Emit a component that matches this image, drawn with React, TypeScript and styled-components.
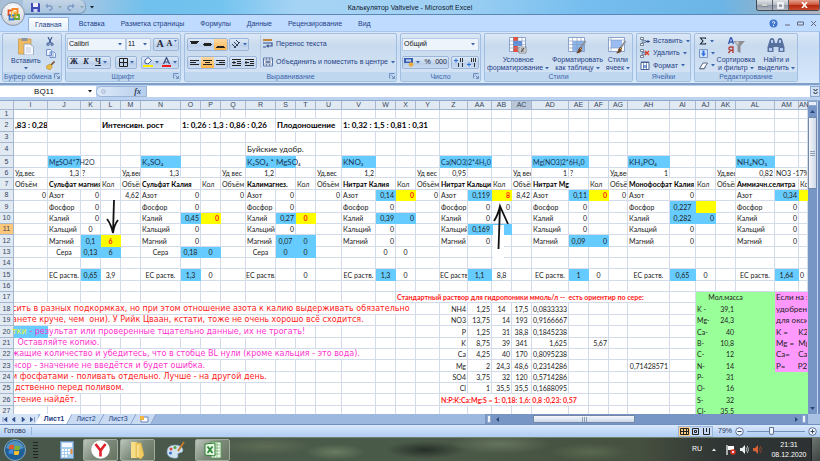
import React from "react";
import styled, { createGlobalStyle, css } from "styled-components";

const ui = `"Liberation Sans", Arial, sans-serif`;
const sheetFont = `Lato, "Noto Sans", sans-serif`;
const wideFont = `"DejaVu Sans", Verdana, sans-serif`;
const navy = "#1f3f86";

const Global = createGlobalStyle`
  *, *::before, *::after { box-sizing: border-box; }
  html, body { margin: 0; height: 100%; overflow: hidden; }
  body { font-family: ${ui}; font-size: 7px; line-height: 8px; color: ${navy}; }
  button, input, select { font: inherit; color: inherit; margin: 0; padding: 0; border: 0; background: none; outline: 0; border-radius: 0; }
  button { display: inline-flex; align-items: center; justify-content: center; white-space: nowrap; }
  svg { display: block; flex: none; }
`;

const Screen = styled.div`
  display: flex;
  flex-direction: column;
  height: 100vh;
  min-width: 0;
  overflow: hidden;
`;

/* ---------- title bar ---------- */
const TitleBar = styled.header`
  position: relative;
  display: flex;
  align-items: flex-start;
  height: 15px;
  flex: none;
  background: linear-gradient(90deg, #a9bfd6 0, #a4c6e4 10%, #6fc0ec 18%, #74c4f0 27%, #a5d3f4 36%, #9fd0f3 55%, #74bdee 72%, #6bb4e6 88%, #8fb2cc 94%, #b6b4bb 100%);
  border-bottom: 1px solid #5c87b5;
`;
const OfficeButton = styled.button`
  position: absolute;
  left: 1px;
  top: 2px;
  z-index: 3;
  width: 24px;
  height: 24px;
  && {
    border-radius: 50%;
    border: 1px solid #8a97a8;
    background: radial-gradient(circle at 50% 30%, #ffffff, #e3e6eb 55%, #b5bdc9);
  }
`;
const QuickAccess = styled.div`
  display: flex;
  align-items: center;
  gap: 5px;
  height: 14px;
  margin-left: 23px;
  padding: 1px 6px 0 8px;
  width: 63px;
  border: 1px solid #7f9dbb;
  border-left: 0;
  border-top: 0;
  border-radius: 0 6px 6px 0;
  background: linear-gradient(#c3d4e6, #a9c4df);
`;
const QuickMore = styled.button`
  height: 14px;
  && { margin-left: 4px; }
`;
const Title = styled.h1`
  flex: 1;
  margin: 0;
  padding-top: 4px;
  padding-right: 30px;
  text-align: center;
  font-size: 7px;
  font-weight: 400;
  color: #10202f;
`;
const WindowButtons = styled.div`
  display: flex;
  height: 11px;
  border: 1px solid #3f4c58;
  border-top: 0;
  border-right: 0;
  border-radius: 0 0 3px 3px;
  overflow: hidden;
`;
const WindowButton = styled.button<{ $close?: boolean }>`
  width: ${(p) => (p.$close ? 31 : 16)}px;
  && {
    border-right: 1px solid #56636f;
    background: ${(p) =>
      p.$close
        ? "linear-gradient(#e4a28f, #cf5a3f 45%, #b2270f 50%, #c94a2c)"
        : "linear-gradient(#dfe2e6, #b9bfc8 45%, #8e98a6 50%, #b0b6bf)"};
  }
`;

/* ---------- ribbon ---------- */
const TabBar = styled.nav`
  display: flex;
  align-items: flex-end;
  gap: 4px;
  height: 16px;
  flex: none;
  padding-left: 28px;
  background: #bfdbff;
`;
const Tab = styled.button<{ $active?: boolean }>`
  height: 14px;
  && {
    padding: 0 6px;
    ${(p) =>
      p.$active &&
      css`
        background: linear-gradient(#fdfeff, #e3eefa);
        border: 1px solid #90b0db;
        border-bottom: 0;
        border-radius: 2px 2px 0 0;
      `}
  }
`;
const TabTools = styled.div`
  display: flex;
  align-items: center;
  gap: 7px;
  height: 16px;
  margin-left: auto;
  padding-right: 4px;
`;
const RibbonBar = styled.section`
  display: grid;
  grid-template-columns: 60px 116px 213px 81px 149px 55px 104px;
  gap: 3px;
  height: 54px;
  flex: none;
  padding: 1px 1px 1px 2px;
  background: linear-gradient(#d9e7f8, #c8dcf3 30%, #d3e5fa 90%, #dcebfc);
  border: 1px solid #8eb0dc;
  border-left: 0;
  border-top-color: #a9c5e8;
  border-bottom: 2px solid #7f9fc9;
`;
const Group = styled.section`
  display: flex;
  flex-direction: column;
  min-width: 0;
  border: 1px solid #a2bfe2;
  border-radius: 2px;
  background: linear-gradient(#dce8f5, #c8daee 25%, #d6e5f6);
  overflow: hidden;
`;
const GroupBody = styled.div`
  flex: 1;
  display: flex;
  justify-content: space-between;
  padding: 1px 1px 0;
  min-height: 0;
`;
const Stack = styled.div<{ $pad?: number; $grow?: boolean }>`
  display: flex;
  flex-direction: column;
  padding-left: ${(p) => p.$pad ?? 0}px;
  flex: ${(p) => (p.$grow ? 1 : "none")};
`;
const GroupLabel = styled.h2`
  position: relative;
  display: flex;
  align-items: center;
  justify-content: center;
  height: 9px;
  flex: none;
  margin: 0;
  font-size: 7px;
  font-weight: 400;
  color: #3c66ab;
  background: #c0d7f0;
`;
const ClipboardLabel = styled(GroupLabel)`
  justify-content: flex-start;
  padding-left: 1px;
`;
const Launcher = styled.button`
  position: absolute;
  right: 1px;
  top: 1px;
`;
const Line = styled.div<{ $gap?: number; $spread?: boolean }>`
  display: flex;
  align-items: center;
  justify-content: ${(p) => (p.$spread ? "space-between" : "flex-start")};
  gap: ${(p) => p.$gap ?? 2}px;
  height: 18px;
`;
const BigButton = styled.button`
  flex-direction: column;
  flex: none;
  && {
    justify-content: flex-start;
    padding: 2px 1px 0;
  }
  gap: 2px;
  color: ${navy};
`;
const Caption = styled.span`
  display: block;
  text-align: center;
`;
const Inline = styled.span`
  display: inline-flex;
  align-items: center;
  gap: 2px;
`;
const Cluster = styled.div`
  display: flex;
  align-items: stretch;
  height: 13px;
  border: 1px solid #9ab5d8;
  border-radius: 2px;
  background: linear-gradient(#dce8f6, #c3d6ee 50%, #b7cde9 51%, #cbdcf1);
`;
const Tool = styled.button<{ $on?: boolean; $w?: number }>`
  width: ${(p) => p.$w ?? 13}px;
  gap: 2px;
  && {
    color: #1b2438;
    ${(p) => p.$on && css`background: linear-gradient(#fbd9a2, #fdb44c);`}
  }
`;
const Letter = styled.span<{ $italic?: boolean; $under?: boolean; $big?: boolean }>`
  font-family: "Liberation Serif", serif;
  font-weight: 700;
  font-size: ${(p) => (p.$big ? 10 : 8)}px;
  font-style: ${(p) => (p.$italic ? "italic" : "normal")};
  text-decoration: ${(p) => (p.$under ? "underline" : "none")};
`;
const Picker = styled.label<{ $w: number }>`
  display: flex;
  align-items: center;
  width: ${(p) => p.$w}px;
  height: 13px;
  padding-right: 3px;
  background: #eef4fc;
  border: 1px solid #b4cae6;
  color: #111;
  select {
    flex: 1;
    min-width: 0;
    padding-left: 1px;
    appearance: none;
    font-size: 7px;
  }
`;
const SmallButton = styled.button`
  gap: 3px;
  height: 13px;
  && { justify-content: flex-start; color: ${navy}; }
`;
const WideButton = styled(SmallButton)`
  height: 18px;
`;
const Divider = styled.i`
  width: 1px;
  height: 33px;
  background: #b3c9e4;
`;

/* ---------- formula bar ---------- */
const FormulaBar = styled.div`
  display: flex;
  height: 16px;
  flex: none;
  padding: 1px 0 3px;
  background: #bdd2ee;
  border-bottom: 1px solid #8da9cf;
`;
const NameBox = styled.label`
  display: flex;
  align-items: center;
  width: 96px;
  padding-right: 4px;
  background: #fff;
  color: #111;
  input { flex: 1; min-width: 0; text-align: center; font-size: 8px; }
`;
const FxArea = styled.div`
  display: flex;
  align-items: center;
  justify-content: space-between;
  width: 51px;
  padding: 0 5px 0 4px;
  border-radius: 6px 0 0 6px;
  border: 1px solid #9ab5d8;
  background: linear-gradient(90deg, #dfeaf8, #b4cdec);
  color: #33415c;
`;
const FormulaInput = styled.input`
  && { flex: 1; background: #fff; }
`;
const Expand = styled.button`
  width: 10px;
  && { background: #cfe0f5; border: 1px solid #8da9cf; }
`;

/* ---------- worksheet ---------- */
const Workspace = styled.main`
  display: flex;
  flex: 1;
  min-height: 0;
  overflow: hidden;
  background: #fff;
`;
const SheetPane = styled.div`
  position: relative;
  flex: 1;
  min-width: 0;
  overflow: hidden;
`;
const Sheet = styled.table`
  width: 100%;
  table-layout: fixed;
  border-collapse: separate;
  border-spacing: 0;
  font-family: ${sheetFont};
  font-size: 7px;
  line-height: 8px;
  color: #222;
`;
const Col = styled.col<{ $w?: number }>`
  width: ${(p) => (p.$w ? p.$w + "px" : "auto")};
`;
const Tr = styled.tr<{ $h: number }>`
  height: ${(p) => p.$h}px;
`;
const Head = styled.th<{ $tone?: "dark" | "hot" }>`
  padding: 0;
  font-family: ${ui};
  font-size: 7px;
  font-weight: 400;
  color: #35465c;
  text-align: center;
  background: ${(p) => (p.$tone === "hot" ? "#fcc778" : p.$tone === "dark" ? "#b9c6d8" : "#e1e9f3")};
  border-right: 1px solid #a5b8d0;
  border-bottom: 1px solid #a5b8d0;
`;

type CellSpec = {
  text?: React.ReactNode;
  align?: "left" | "right" | "center";
  fill?: string;
  color?: string;
  bold?: boolean;
  span?: number;
  spill?: boolean;
  kind?: "formula" | "title" | "note";
  cut?: boolean;
};
const Td = styled.td<{ $c: CellSpec }>`
  padding: 0 ${(p) => (p.$c.align === "center" ? 0 : 1)}px;
  white-space: pre;
  vertical-align: middle;
  overflow: ${(p) => (p.$c.spill ? "visible" : "hidden")};
  text-align: ${(p) => p.$c.align ?? "left"};
  font-weight: ${(p) => (p.$c.bold ? 700 : 400)};
  color: ${(p) => p.$c.color ?? "inherit"};
  background: ${(p) => p.$c.fill ?? "transparent"};
  border-right: 1px solid ${(p) => p.$c.fill ?? "#d3daea"};
  border-bottom: 1px solid ${(p) => p.$c.fill ?? "#d3daea"};
  ${(p) => p.$c.kind === "title" && css`font-size: 8px;`}
  ${(p) => p.$c.kind === "formula" && css`font-size: 8px; color: #1b3350;`}
  ${(p) => p.$c.kind === "note" && css`font-family: ${wideFont}; font-size: 8px;`}
  ${(p) => p.$c.cut && css`text-indent: -3px;`}
`;
const Yellow = styled.span`
  color: #e8f23c;
`;
const Center = styled.span`
  display: flex;
  justify-content: center;
`;

const BLUE = "#66ccff";
const YEL = "#ffff00";
const GREEN = "#99ff99";
const PINK = "#ff99ff";
const RED = "#ff1a1a";
const MAG = "#ff33cc";

const l = (text: React.ReactNode, o: CellSpec = {}): CellSpec => ({ text, ...o });
const r = (text: React.ReactNode, o: CellSpec = {}): CellSpec => ({ text, align: "right", ...o });
const c = (text: React.ReactNode, o: CellSpec = {}): CellSpec => ({ text, align: "center", ...o });
const rb = (t: string) => r(t, { fill: BLUE });
const cb = (t: string) => c(t, { fill: BLUE });
const ry = (t: string) => r(t, { fill: YEL, color: RED, bold: true });
const cy = (t: string) => c(t, { fill: YEL, color: RED, bold: true });
const h = (t: string, span = 2) => l(t, { bold: true, span, color: "#000" });
const f = (t: string, o: CellSpec = {}) => l(t, { fill: BLUE, kind: "formula", ...o });
const plain = (t: string, o: CellSpec = {}) => l(t, { fill: BLUE, color: "#1b3350", ...o });

const columns: [string, number?][] = [
  ["I", 34], ["J", 33], ["K", 20], ["L", 20], ["M", 20], ["N", 40], ["O", 20], ["P", 20],
  ["Q", 25], ["R", 30], ["S", 20], ["T", 20], ["U", 26], ["V", 34], ["W", 20], ["X", 20],
  ["Y", 24], ["Z", 28], ["AA", 24], ["AB", 20], ["AC", 20], ["AD", 37], ["AE", 20], ["AF", 20],
  ["AG", 19], ["AH", 42], ["AI", 26], ["AJ", 20], ["AK", 20], ["AL", 39], ["AM", 24], ["AN"],
];

type RowSpec = [number, Record<string, CellSpec>];

const names = (t: string, align: "left" | "center" = "left") =>
  Object.fromEntries(["J", "N", "R", "V", "Z", "AD", "AH", "AL"].map((k) => [k, { text: t, align } as CellSpec]));

const mass = (label: string, value: string, tail?: string): Record<string, CellSpec> => ({
  AJ: l(label, { fill: GREEN }),
  AK: r(value, { fill: GREEN }),
  AL: { fill: GREEN },
  AM: tail ? l(tail, { fill: PINK, span: 2, kind: "title" }) : { fill: GREEN, span: 2 },
});
const std = (name: string, a: string, b: string, m: string, d: string) => ({
  Z: r(name), AA: r(a), AB: r(b), AC: c(m), AD: r(d),
});

const rows: RowSpec[] = [
  [9, {}],
  [13, {
    I: l(",83 : 0,28", { bold: true, kind: "title", color: "#000" }),
    L: l("Интенсивн. рост", { bold: true, kind: "title", span: 3, color: "#000" }),
    O: l("1: 0,26 : 1,3 : 0,86 : 0,26", { bold: true, kind: "title", span: 4, color: "#000" }),
    S: l("Плодоношение", { bold: true, kind: "title", span: 3, color: "#000" }),
    V: l("1: 0,32 : 1,5 : 0,81 : 0,31", { bold: true, kind: "title", span: 4, color: "#000" }),
  }],
  [11, {}],
  [13, { R: l("Буйские удобр.", { kind: "title", span: 3 }) }],
  [12, {
    J: plain("MgSO4*7H2O", { spill: true }), N: f("K₂SO₄"),
    R: f("K₂SO₄ * MgSO₄", { span: 2, spill: true }), V: f("KNO₃"),
    Z: plain("Ca(NO3)2*4H₂0", { span: 2 }), AD: plain("Mg(NO3)2*6H₂0", { span: 2 }),
    AH: f("KH₂PO₄"), AL: f("NH₄NO₃"),
  }],
  [10, {
    I: l("Уд.вес"), J: r("1,3"), K: l("?"), M: l("Уд.вес"), N: r("1,3"), Q: l("Уд вес"), R: r("1,2"),
    U: l("Уд.вес"), V: r("1,2"), Y: l("Уд вес"), Z: r("0,95"), AC: l("Уд вес"), AD: r("1"), AE: l("?"),
    AG: l("Уд,вес"), AH: r("1"), AK: l("Уд,вес"), AL: r("0,82"), AM: l("NO3 -17%;", { span: 2 }),
  }],
  [12, {
    I: l("Объём"), J: h("Сульфат магния"), L: l("Кол"), M: l("Объём"), N: h("Сульфат Калия"), P: l("Кол"),
    Q: l("Объём"), R: h("Калимагнез."), T: l("Кол"), U: l("Объём"), V: h("Нитрат Калия"), X: l("Кол"),
    Y: l("Объём"), Z: h("Нитрат Кальция"), AB: l("Кол"), AC: l("Объём"), AD: h("Нитрат Mg"),
    AF: l("Кол"), AG: l("Объём"), AH: h("Монофосфат Калия"), AJ: l("Кол"), AK: l("Объём"),
    AL: h("Аммиачн.селитра"), AN: l("Кол"),
  }],
  [11, {
    ...names("Азот"), I: r("0"), K: r("0"), M: r("4,62"), O: r("0"), Q: r("0"), S: r("0"), U: r("0"),
    W: rb("0,14"), X: ry("0"), Y: r("0"), AA: rb("0,119"), AB: ry("8"), AC: r("8,42"), AE: rb("0,11"),
    AF: ry("0"), AG: r("0"), AI: r("0"), AM: rb("0,34"), AN: { fill: YEL },
  }],
  [12, {
    ...names("Фосфор"), K: r("0"), O: r("0"), S: r("0"), W: r("0"), AA: r("0"), AB: r("0"), AE: r("0"),
    AI: cb("0,227"), AJ: { fill: YEL }, AM: r("0"),
  }],
  [11, {
    ...names("Калий"), K: r("0"), O: rb("0,45"), P: ry("0"), S: rb("0,27"), T: cy("0"), W: rb("0,39"),
    X: rb("0"), AA: r("0"), AE: r("0"), AI: cb("0,282"), AJ: rb("0"), AM: r("0"),
  }],
  [11, {
    ...names("Кальций"), K: c("0"), O: r("0"), S: r("0"), W: r("0"), AA: rb("0,169"), AB: { fill: BLUE },
    AE: r("0"), AI: r("0"), AM: r("0"),
  }],
  [12, {
    ...names("Магний"), K: cb("0,1"), L: cy("6"), O: r("0"), S: cb("0,07"), T: cb("0"), W: r("0"),
    AA: r("0"), AE: cb("0,09"), AF: rb("0"), AI: r("0"), AM: r("0"),
  }],
  [11, {
    J: c("Сера"), K: cb("0,13"), L: cb("6"), N: c("Сера"), O: cb("0,18"), P: cb("0"), R: c("Сера"),
    S: cb("0"), T: cb("0"), W: c("0"), X: c("0"),
  }],
  [11, {}],
  [12, {
    ...names("ЕС раств.", "center"), K: cb("0,65"), L: c("3,9"), O: cb("1,3"), P: c("0"), T: c("0"),
    W: cb("1,3"), X: c("0"), AA: cb("1,1"), AB: c("8,8"), AE: cb("1"), AF: c("0"), AI: cb("0,65"),
    AJ: c("0"), AM: cb("1,64"), AN: l("0"),
  }],
  [11, {}],
  [11, {
    X: l("Стандартный раствор для гидропоники ммоль/л --  есть ориентир по сере:", { bold: true, color: RED, span: 11 }),
    AJ: { fill: GREEN }, AK: { text: <Center>Мол.масса</Center>, fill: GREEN, spill: true }, AL: { fill: GREEN },
    AM: l("Если на эт", { fill: PINK, kind: "title", span: 2 }),
  }],
  [12, {
    I: l("сить в разных подкормках, но при этом отношение азота к калию выдерживать обязательно", { kind: "note", color: RED, span: 16, cut: true }),
    ...std("NH4", "1,25", "14", "17,5", "0,0833333"), AB: c("14"), ...mass("K -", "39,1", "удобрения"),
  }],
  [11, {
    I: l("анете круче, чем  они). У Рийк Цваан, кстати, тоже не очень хорошо всё сходится.", { kind: "note", color: RED, span: 14, cut: true }),
    ...std("NO3", "13,75", "14", "193", "0,9166667"), ...mass("Mg-", "24,3", "для оксид"),
  }],
  [12, {
    I: l(<><Yellow>тки</Yellow> - результат или проверенные тщательно данные, их не трогать!</>, { kind: "note", color: MAG, fill: BLUE, spill: true, cut: true }),
    J: { span: 11 },
    ...std("P", "1,25", "31", "38,8", "0,1845238"), ...mass("Ca-", "40", "K =     K2"),
  }],
  [11, {
    I: l(" Оставляйте копию.", { kind: "note", color: MAG, span: 3 }),
    ...std("K", "8,75", "39", "341", "1,625"), AF: r("5,67"), ...mass("B-", "10,8", "Mg =  Mg"),
  }],
  [11, {
    I: l("жащие количество и убедитесь, что в стобце BL нули (кроме кальция - это вода).", { kind: "note", color: MAG, span: 14, cut: true }),
    ...std("Ca", "4,25", "40", "170", "0,8095238"), ...mass("C-", "12", "Ca=    Ca"),
  }],
  [12, {
    I: l("нсор - значение не введётся и будет ошибка.", { kind: "note", color: MAG, span: 8, cut: true }),
    ...std("Mg", "2", "24,3", "48,6", "0,2314286"), AH: r("0,71428571"), ...mass("N-", "14", "P=      P2"),
  }],
  [11, {
    I: l("и фосфатами - поливать отдельно. Лучше - на другой день.", { kind: "note", color: RED, span: 10, cut: true }),
    ...std("SO4", "3,75", "32", "120", "0,5714286"), ...mass("P-", "31"),
  }],
  [11, {
    I: l("дственно перед поливом.", { kind: "note", color: RED, span: 5 }),
    ...std("Cl", "1", "35,5", "35,5", "0,1688095"), ...mass("O-", "16"),
  }],
  [12, {
    I: l("стение найдёт.", { kind: "note", color: RED, span: 2, cut: true }),
    Z: l("N:P:K:Ca:Mg:S = 1: 0,18: 1,6: 0,8 :0,23: 0,57", { bold: true, color: RED, span: 6 }),
    ...mass("S-", "32"),
  }],
  [11, { ...mass("Cl-", "35,5") }],
];

function renderCells(cells: Record<string, CellSpec>) {
  const out: React.ReactNode[] = [];
  for (let i = 0; i < columns.length; ) {
    const name = columns[i][0];
    const spec = cells[name] ?? {};
    const span = spec.span ?? 1;
    out.push(<Td key={name} $c={spec} colSpan={span}>{spec.text}</Td>);
    i += span;
  }
  return out;
}

const Arrow = styled.svg<{ $x: number; $y: number }>`
  position: absolute;
  left: ${(p) => p.$x}px;
  top: ${(p) => p.$y}px;
`;

const VScroll = styled.div`
  display: flex;
  flex-direction: column;
  align-items: center;
  width: 12px;
  flex: none;
  padding-right: 3px;
  background: linear-gradient(90deg, #7896c5 0 9px, #c3d5ee 9px 10px, #6d8cbd 10px);
`;
const Split = styled.i`
  width: 9px;
  height: 5px;
  background: #e4edf8;
  border: 1px solid #8fa8cc;
`;
const ScrollArrow = styled.button<{ $end?: boolean }>`
  height: 11px;
  width: 9px;
  && { ${(p) => p.$end && css`margin-top: auto;`} }
`;
const VThumb = styled.div`
  display: flex;
  align-items: center;
  justify-content: center;
  width: 9px;
  height: 72px;
  border: 1px solid #7387a6;
  border-radius: 1px;
  background: linear-gradient(90deg, #f4f7fb, #cdd8e8);
`;

/* ---------- sheet tabs and status ---------- */
const SheetTabs = styled.nav`
  display: flex;
  align-items: stretch;
  height: 11px;
  flex: none;
  background: #9cb8de;
  border-bottom: 1px solid #6e8fc0;
`;
const Pager = styled.div`
  display: flex;
  align-items: center;
  justify-content: space-around;
  width: 38px;
  background: #d5e3f6;
`;
const SheetTab = styled.button<{ $active?: boolean; $w?: number }>`
  position: relative;
  width: ${(p) => p.$w ?? 32}px;
  && { font-size: 7px; font-weight: ${(p) => (p.$active ? 700 : 400)}; }
  &::before {
    content: "";
    position: absolute;
    inset: 0;
    background: ${(p) => (p.$active ? "#fff" : "#c9dbf3")};
    border-right: 1px solid #7d9bc8;
    transform: skewX(-28deg);
  }
  > * { position: relative; }
`;
const HScroll = styled.div`
  display: flex;
  align-items: center;
  width: 335px;
  margin-left: auto;
  padding: 0 14px 0 2px;
  background: linear-gradient(90deg, #7896c5 0 323px, #a9c2e4 323px);
`;
const Grip = styled.i`
  width: 4px;
  height: 8px;
  background: #eef3fa;
  border: 1px solid #91a9cc;
`;
const HArrow = styled.button`
  width: 12px;
  height: 9px;
`;
const HTrack = styled.div`
  flex: 1;
  display: flex;
  padding-left: 30px;
`;
const HThumb = styled.div`
  display: flex;
  align-items: center;
  justify-content: center;
  width: 102px;
  height: 8px;
  border: 1px solid #7387a6;
  background: linear-gradient(#f4f7fb, #cdd8e8);
`;
const StatusBar = styled.footer`
  display: flex;
  align-items: center;
  height: 12px;
  flex: none;
  padding: 0 3px 0 4px;
  background: linear-gradient(#dbe9fb, #c3daf8 50%, #b0ccf3);
  color: #1c2c50;
`;
const Ready = styled.span`
  width: 28px;
  border-right: 1px solid #9ab5da;
`;
const Views = styled.div`
  display: flex;
  height: 11px;
  margin-left: auto;
  border: 1px solid #9ab5da;
`;
const ViewButton = styled.button<{ $on?: boolean }>`
  width: 11px;
  && { background: ${(p) => (p.$on ? "#fdcf86" : "#c6daf5")}; }
`;
const Zoom = styled.label`
  display: flex;
  align-items: center;
  gap: 3px;
  padding-left: 5px;
`;
const Range = styled.input`
  && {
    appearance: none;
    width: 58px;
    height: 10px;
    background: linear-gradient(#7590b8, #7590b8) center / 100% 1px no-repeat;
  }
  &::-webkit-slider-thumb {
    appearance: none;
    width: 5px;
    height: 8px;
    border: 1px solid #5f7397;
    border-radius: 1px 1px 3px 3px;
    background: #eef4fc;
  }
`;

/* ---------- taskbar ---------- */
const Taskbar = styled.footer`
  display: flex;
  align-items: center;
  height: 24px;
  flex: none;
  padding-left: 4px;
  color: #fff;
  border-top: 1px solid #71816f;
  background:
    radial-gradient(ellipse 40px 9px at 425px 12px, #262e28, transparent),
    radial-gradient(ellipse 30px 8px at 335px 14px, #6a7c60, transparent),
    radial-gradient(ellipse 50px 10px at 500px 6px, #65745e, transparent),
    radial-gradient(ellipse 40px 9px at 590px 14px, #59694f, transparent),
    radial-gradient(ellipse 50px 9px at 265px 8px, #5e6c54, transparent),
    linear-gradient(90deg, #47564a, #4b5b49 50%, #46503f 78%, #2f3534 88%, #2c3032);
`;
const Dots = styled.i`
  width: 5px;
  height: 18px;
  margin: 0 15px 0 7px;
  background: radial-gradient(circle, #20261f 0 1px, transparent 1px) 0 0 / 2px 3px;
`;
const Task = styled.button<{ $open?: boolean; $w: number }>`
  width: ${(p) => p.$w}px;
  height: 22px;
  ${(p) =>
    p.$open &&
    css`
      && {
        border: 1px solid #9fac9d;
        border-radius: 2px;
        background: linear-gradient(135deg, #bcc6bb, #7d8a7b 50%, #66735f);
      }
    `}
`;
const TaskList = styled.div`
  display: flex;
  align-items: center;
  gap: 2px;
`;
const Tray = styled.div`
  display: flex;
  align-items: center;
  gap: 4px;
  margin-left: auto;
  padding-right: 4px;
`;
const Lang = styled.span`
  padding: 0 6px 2px 0;
`;
const TrayIcon = styled.span`
  padding-left: 6px;
`;
const Clock = styled.time`
  width: 36px;
  margin-left: 5px;
  text-align: center;
  line-height: 10px;
`;
const ShowDesktop = styled.button`
  width: 9px;
  height: 23px;
  && { background: linear-gradient(135deg, #6e7672, #3c4240); border-left: 1px solid #1d2120; }
`;

/* ---------- drawings ---------- */
const Caret = ({ fill = "#3c66ab", up }: { fill?: string; up?: boolean }) => (
  <svg width="4" height="3" viewBox="0 0 4 3"><path d={up ? "M0 3h4L2 .4z" : "M0 0h4L2 2.6z"} fill={fill} /></svg>
);
const WindowsFlag = ({ s = 14 }: { s?: number }) => (
  <svg width={s} height={s} viewBox="0 0 14 14">
    <path d="M1 3q3-2 5-.5L5.500 7Q3 5.800.3 7z" fill="#e8562a" />
    <path d="M7 2.800q3 1.500 5.500.2L11.800 7.300Q9 8.300 6.400 7.200z" fill="#7ab52f" />
    <path d="M.2 8q3-1.200 5.200 0L4.700 12Q2.500 10.800-.3 12z" fill="#3f8ee0" />
    <path d="M6.300 8.200q2.500 1.200 5.300.2L11 12.400q-2.700 1.200-5.300 0z" fill="#fbc22d" />
  </svg>
);
const OfficeLogo = () => (
  <svg width="15" height="15" viewBox="0 0 15 15" fill="none" strokeWidth="1.800">
    <path d="M6.500 3.500H2.500v4.500h3" stroke="#e2501f" />
    <path d="M6.500 4V2h5v4.500h-4" stroke="#f5892a" />
    <path d="M3.500 8.500v4h4v-4z" stroke="#3b78c9" />
    <path d="M9 8h4v4H9z" stroke="#67a832" />
    <path d="M5.500 5h4.500v5H5.500z" stroke="#f3b52e" strokeWidth="1.200" />
  </svg>
);
const SaveIcon = () => (
  <svg width="9" height="9" viewBox="0 0 9 9"><path d="M0 0h8l1 1v8H0z" fill="#3d49b5" /><path d="M2 0h5v4H2z" fill="#eef" /><path d="M2.500 6h4v3h-4z" fill="#cdd3f3" /></svg>
);
const Undo = ({ flip }: { flip?: boolean }) => (
  <svg width="8" height="8" viewBox="0 0 8 8"><g transform={flip ? "matrix(-1 0 0 1 8 0)" : undefined}><path d="M1.500 3h3.500a2 2 0 0 1 0 4H4" stroke="#7f9cc6" strokeWidth="1.400" fill="none" /><path d="M0 3 3 .4v5z" fill="#7f9cc6" /></g></svg>
);
const Align = ({ d }: { d: string }) => (
  <svg width="9" height="9" viewBox="0 0 9 9"><path d={d} stroke="#222" strokeWidth="1" fill="none" /></svg>
);
const PasteIcon = () => (
  <svg width="16" height="18" viewBox="0 0 16 18"><path d="M.5 2h12.500v15H.5z" fill="#eebb60" stroke="#c48a35" strokeWidth=".6" /><path d="M3.500 1h6v3h-6z" fill="#8e9299" /><path d="M6 7h6l3.500 3v8H6z" fill="#f5f8ff" stroke="#8797b5" strokeWidth=".7" /><path d="M8 11h5M8 13h5M8 15h5" stroke="#a5b3cc" strokeWidth=".6" /></svg>
);
const CutIcon = () => (
  <svg width="8" height="9" viewBox="0 0 8 9" fill="none" stroke="#34528f"><path d="M2 0l3 6M6 0 3 6" strokeWidth="1.100" /><circle cx="2" cy="7.200" r="1.200" /><circle cx="6" cy="7.200" r="1.200" /></svg>
);
const CopyIcon = () => (
  <svg width="10" height="9" viewBox="0 0 10 9"><path d="M.5.500h4l1 1v5h-5zM4 3h4l1.500 1.500V8.500H4z" fill="#eef4ff" stroke="#5b7fc4" strokeWidth=".8" /><path d="M5 5h3M5 7h3" stroke="#5b7fc4" strokeWidth=".7" /></svg>
);
const BrushIcon = () => (
  <svg width="9" height="9" viewBox="0 0 9 9"><path d="M8.500.500 5 4" stroke="#7a5330" strokeWidth="1.600" /><path d="M1 4.500 4 3l2.500 2.500L4 9 0 7z" fill="#e9bb49" stroke="#a77b22" strokeWidth=".5" /></svg>
);
const GridIcon = ({ kind }: { kind: "cond" | "table" | "style" }) => (
  <svg width="19" height="17" viewBox="0 0 19 17">
    <path d="M.5.500h16v14h-16z" fill="#fff" stroke="#7591bd" strokeWidth=".8" />
    {kind === "cond" && <><path d="M4 0h5v4H4zM4 11h5v4H4z" fill="#e8503a" /><path d="M4 4h9v5H4z" fill="#5b8ede" /><path d="M4 9h5v3H4z" fill="#e8503a" /></>}
    {kind === "table" && <path d="M5 4h11v10H5z" fill="#8db7ea" />}
    {kind === "style" && <path d="M3 3h11v8H3z" fill="#9bbcf0" />}
    <path d={kind === "style" ? "M.5 3h16M3 .5v14M.5 11h13" : "M.5 4h16M.5 7.500h16M.5 11h16M4.500.500v14M9 .5v14M13 .5v14"} stroke="#7f99c4" strokeWidth=".6" />
    {kind === "cond" ? <><path d="M10 10h7v6h-7z" fill="#eee" stroke="#555" strokeWidth=".6" /><path d="M11.500 12h4M11.500 14h4M15 11l-3 4" stroke="#333" strokeWidth=".8" /></> : <><path d="m17.500 4-5 7" stroke="#8b8f98" strokeWidth="2" /><path d="M12.500 10q2 1 1.500 3-2 4-6 3 2-1 2-3 1-2.500 2.500-3z" fill="#6e4a33" /><path d="m12 11 2 2" stroke="#e5b05a" /></>}
  </svg>
);
const CellsIcon = ({ kind }: { kind: "ins" | "del" | "fmt" }) => (
  <svg width="10" height="9" viewBox="0 0 10 9">
    {kind === "fmt" ? <><path d="M1 1.500h8v7H1z" fill="#fff" stroke="#445e90" /><path d="M3 4h4v3H3z" fill="#7ea5e4" /><path d="M1 .3h8M3.500 1v7M6.500 1v7" stroke="#445e90" strokeWidth=".6" /></> : <><path d="M.5.500h3v2h-3zM.5 6.500h3v2h-3z" fill="#fff" stroke="#56647e" strokeWidth=".8" /><path d="M2 3.500h4v2H2z" fill="#a6c0ea" stroke="#56647e" strokeWidth=".6" />{kind === "ins" ? <path d="M6 4.500h4M8 3v3" stroke="#334b86" strokeWidth="1" /> : <path d="m5 2 4 4m0-4L5 6" stroke="#e23c22" strokeWidth="1.400" />}</>}
  </svg>
);
const SortIcon = () => (
  <svg width="18" height="17" viewBox="0 0 18 17"><path d="m1.500 7 2-6h1l2 6M2.200 5h3.600" stroke="#3458b0" strokeWidth="1.300" fill="none" /><path d="M6 16v-6H3.500a1.600 1.600 0 0 0 0 3.200H6M3.800 13 1.500 16" stroke="#b13a35" strokeWidth="1.400" fill="none" /><path d="M6.500 4H18l-4.500 5v7l-3-1.500V9z" fill="#8f8f92" /><path d="M8 4.500h4l-1 4z" fill="#c9c9cb" /></svg>
);
const FindIcon = () => (
  <svg width="18" height="17" viewBox="0 0 18 17"><path d="M3 2q2-2 4 0l1 4h2l1-4q2-2 4 0l2.500 8v5h-6v-5H6.500v5h-6v-5z" fill="#56719e" /><path d="M2 11h3v3H2zM13 11h3v3h-3zM4 3h2v3H4zM12 3h2v3h-2z" fill="#b6cbec" /></svg>
);
const SumIcon = () => (
  <svg width="8" height="8" viewBox="0 0 8 8"><path d="M6.500 2V1H1.500L4 4 1.500 7h5V6" stroke="#1b2438" strokeWidth="1.100" fill="none" /></svg>
);
const FillIcon = () => (
  <svg width="9" height="9" viewBox="0 0 9 9"><path d="M.5.500h8v8h-8z" fill="#cfe2fb" stroke="#7a97c8" /><path d="M3.500 1.500h2v3H7L4.500 7.500 2 4.500h1.500z" fill="#2f6fe0" /></svg>
);
const EraseIcon = () => (
  <svg width="9" height="8" viewBox="0 0 9 8"><path d="M4 1h4.500L5 6.500H.5z" fill="#fff" stroke="#4c5b76" strokeWidth=".9" /><path d="M.5 6.500H5l2-3v2L5.200 7.500H.5z" fill="#7d8aa2" /></svg>
);
const WrapIcon = () => (
  <svg width="10" height="10" viewBox="0 0 10 10"><path d="M0 1h9" stroke="#c4853c" strokeWidth="2" /><path d="M0 4h9v3H5M0 8h3" stroke="#34528f" fill="none" strokeWidth="1.200" /><path d="M5.500 5v4L3 7z" fill="#34528f" /></svg>
);
const MergeIcon = () => (
  <svg width="10" height="10" viewBox="0 0 10 10"><path d="M.5 1h9v8h-9z" fill="#fff" stroke="#5673a8" /><path d="M.5 3h9M.5 7h9M3.500 1v2M6.500 1v2M3.500 7v2M6.500 7v2" stroke="#5673a8" strokeWidth=".7" /><path d="M2 5h6M4 3.800v2.400M6 3.800v2.400" stroke="#24407c" strokeWidth=".8" /></svg>
);
const LaunchIcon = () => (
  <svg width="6" height="6" viewBox="0 0 5 5"><path d="M.5 4.500v-4h4M2 2l2.500 2.500M4.500 2.500v2h-2" stroke="#6685b6" strokeWidth=".8" fill="none" /></svg>
);
const FontTip = ({ down }: { down?: boolean }) => (
  <svg width="3" height="8" viewBox="0 0 3 8"><path d={down ? "M0 0h3L1.500 2z" : "M0 2h3L1.500 0z"} fill="#3c66ab" /></svg>
);
const Speaker = ({ hot }: { hot?: boolean }) => (
  <svg width="9" height="9" viewBox="0 0 9 9"><path d="M0 3h2l3-3v9L2 6H0z" fill={hot ? "#d8613a" : "#eef0ee"} /><path d="M6 2.500q1.500 2 0 4M7.300 1q2.500 3.500 0 7" stroke={hot ? "#a2472d" : "#dfe3df"} strokeWidth=".8" fill="none" /></svg>
);

const Ribbon = () => (
  <RibbonBar>
    <Group>
      <GroupBody>
        <Stack $pad={6}><BigButton><PasteIcon /><Caption>Вставить</Caption><Caret /></BigButton></Stack>
        <Stack>
          <SmallButton aria-label="Вырезать"><CutIcon /></SmallButton>
          <SmallButton aria-label="Копировать"><CopyIcon /></SmallButton>
          <SmallButton aria-label="Формат по образцу"><BrushIcon /></SmallButton>
        </Stack>
        <Stack />
      </GroupBody>
      <ClipboardLabel>Буфер обмена<Launcher aria-label="Буфер обмена"><LaunchIcon /></Launcher></ClipboardLabel>
    </Group>
    <Group>
      <GroupBody>
        <Stack $grow>
          <Line $spread>
            <Line $gap={0}>
              <Picker $w={59}><select aria-label="Шрифт"><option>Calibri</option></select><Caret /></Picker>
              <Picker $w={25}><select aria-label="Размер"><option>11</option></select><Caret /></Picker>
            </Line>
            <Cluster>
              <Tool $w={12} aria-label="Увеличить размер"><Letter $big>A</Letter></Tool>
              <Tool $w={12} aria-label="Уменьшить размер"><Letter>A</Letter><FontTip down /></Tool>
            </Cluster>
          </Line>
          <Line $spread $gap={1}>
            <Cluster><Tool $w={12}><Letter>Ж</Letter></Tool><Tool $w={12}><Letter $italic>К</Letter></Tool><Tool $w={18}><Letter $under>Ч</Letter><Caret /></Tool></Cluster>
            <Cluster><Tool $w={20} aria-label="Границы"><Align d="M.5.500h8v8h-8zM4.500 0v9M0 4.500h9" /><Caret /></Tool></Cluster>
            <Cluster>
              <Tool $w={18} aria-label="Заливка"><svg width="10" height="10" viewBox="0 0 10 10"><path d="m2 3 3-2.500 3.500 3L5 7 2 6z" fill="#fff" stroke="#3a5c9b" /><path d="M0 8h10v2H0z" fill="#ffeb00" /></svg><Caret /></Tool>
              <Tool $w={18} aria-label="Цвет шрифта"><svg width="9" height="10" viewBox="0 0 9 10"><path d="m1.500 7 3-6.500L7.500 7M2.800 5h3.500" stroke="#3a4c7b" strokeWidth="1.200" fill="none" /><path d="M0 8h9v2H0z" fill="#ee1c1c" /></svg><Caret /></Tool>
            </Cluster>
          </Line>
        </Stack>
      </GroupBody>
      <GroupLabel>Шрифт<Launcher aria-label="Шрифт"><LaunchIcon /></Launcher></GroupLabel>
    </Group>
    <Group>
      <GroupBody>
        <Stack $pad={1}>
          <Line $gap={1}>
            <Cluster>
              <Tool aria-label="По верхнему краю"><Align d="M1 2.500h7M0 1.500h9M1 3.500h6" /></Tool>
              <Tool aria-label="По середине"><Align d="M1 3.500h7M0 4.500h9M1 5.500h7" /></Tool>
              <Tool $on aria-label="По нижнему краю"><Align d="M1 6.500h7M0 7.500h9" /></Tool>
            </Cluster>
            <Cluster><Tool $w={18} aria-label="Ориентация"><svg width="9" height="9" viewBox="0 0 9 9"><path d="M0 4 4 8M2 2l4 4M4 0l3 3M2 8l6-6" stroke="#3a465e" strokeWidth="1" /></svg><Caret /></Tool></Cluster>
          </Line>
          <Line $gap={1}>
            <Cluster>
              <Tool aria-label="По левому краю"><Align d="M0 2.500h9M0 4.500h6M0 6.500h9" /></Tool>
              <Tool $on aria-label="По центру"><Align d="M0 2.500h9M2 4.500h5M0 6.500h9" /></Tool>
              <Tool aria-label="По правому краю"><Align d="M0 2.500h9M3 4.500h6M0 6.500h9" /></Tool>
            </Cluster>
            <Cluster>
              <Tool aria-label="Уменьшить отступ"><Align d="M0 1.500h9M5 3.500h4M5 5.500h4M0 7.500h9M0 4.500h4M2 3v3" /></Tool>
              <Tool aria-label="Увеличить отступ"><Align d="M0 1.500h9M5 3.500h4M5 5.500h4M0 7.500h9M0 4.500h4M1 3v3" /></Tool>
            </Cluster>
          </Line>
        </Stack>
        <Divider />
        <Stack>
          <WideButton><WrapIcon />Перенос текста</WideButton>
          <WideButton><MergeIcon />Объединить и поместить в центре<Caret /></WideButton>
        </Stack>
      </GroupBody>
      <GroupLabel>Выравнивание<Launcher aria-label="Выравнивание"><LaunchIcon /></Launcher></GroupLabel>
    </Group>
    <Group>
      <GroupBody>
        <Stack>
          <Line><Picker $w={77}><select aria-label="Формат числа"><option>Общий</option></select><Caret /></Picker></Line>
          <Line>
            <Cluster>
              <Tool $w={18} aria-label="Денежный формат"><svg width="10" height="9" viewBox="0 0 10 9"><path d="M0 0h9v5H0z" fill="#3a5fb0" /><path d="M2 1.500h5v2H2z" fill="#c6d6f4" /><circle cx="7" cy="6.500" r="2.300" fill="#e9a93a" /></svg><Caret /></Tool>
              <Tool>%</Tool><Tool $w={14}>000</Tool>
            </Cluster>
            <Cluster>
              <Tool aria-label="Увеличить разрядность"><svg width="9" height="9" viewBox="0 0 9 9"><path d="M0 2.500h4M2 .5v4" stroke="#2a6fd6" /><path d="M6.500 0v4M4.500 5v4M8.500 5v4M8.500 0v4" stroke="#333" /></svg></Tool>
              <Tool aria-label="Уменьшить разрядность"><svg width="9" height="9" viewBox="0 0 9 9"><path d="M0 6.500h4M2 4.500v4" stroke="#2a6fd6" /><path d="M4.500 0v4M6.500 0v4M8.500 0v4M7.500 5v4" stroke="#333" /></svg></Tool>
            </Cluster>
          </Line>
        </Stack>
      </GroupBody>
      <GroupLabel>Число<Launcher aria-label="Число"><LaunchIcon /></Launcher></GroupLabel>
    </Group>
    <Group>
      <GroupBody>
        <BigButton><GridIcon kind="cond" /><Caption>Условное<br /><Inline>форматирование<Caret /></Inline></Caption></BigButton>
        <BigButton><GridIcon kind="table" /><Caption>Форматировать<br /><Inline>как таблицу<Caret /></Inline></Caption></BigButton>
        <BigButton><GridIcon kind="style" /><Caption>Стили<br /><Inline>ячеек<Caret /></Inline></Caption></BigButton>
      </GroupBody>
      <GroupLabel>Стили</GroupLabel>
    </Group>
    <Group>
      <GroupBody>
        <Stack $pad={2}>
          <SmallButton><CellsIcon kind="ins" />Вставить<Caret /></SmallButton>
          <SmallButton><CellsIcon kind="del" />Удалить<Caret /></SmallButton>
          <SmallButton><CellsIcon kind="fmt" />Формат<Caret /></SmallButton>
        </Stack>
      </GroupBody>
      <GroupLabel>Ячейки</GroupLabel>
    </Group>
    <Group>
      <GroupBody>
        <Stack $pad={3}>
          <SmallButton aria-label="Сумма"><SumIcon /><Caret /></SmallButton>
          <SmallButton aria-label="Заполнить"><FillIcon /><Caret /></SmallButton>
          <SmallButton aria-label="Очистить"><EraseIcon /><Caret /></SmallButton>
        </Stack>
        <BigButton><SortIcon /><Caption>Сортировка<br /><Inline>и фильтр<Caret /></Inline></Caption></BigButton>
        <BigButton><FindIcon /><Caption>Найти и<br /><Inline>выделить<Caret /></Inline></Caption></BigButton>
      </GroupBody>
      <GroupLabel>Редактирование</GroupLabel>
    </Group>
  </RibbonBar>
);

export default function App() {
  return (
    <Screen>
      <Global />
      <TitleBar>
        <OfficeButton aria-label="Office"><OfficeLogo /></OfficeButton>
        <QuickAccess><SaveIcon /><Undo /><Caret fill="#8aa" /><Undo flip /><Caret fill="#8aa" /></QuickAccess>
        <QuickMore aria-label="Настройка панели"><Caret fill="#123" /></QuickMore>
        <Title>Калькулятор Valtvelve - Microsoft Excel</Title>
        <WindowButtons>
          <WindowButton aria-label="Свернуть"><svg width="7" height="3"><path d="M0 0h7v2H0z" fill="#fff" stroke="#444" strokeWidth=".5" /></svg></WindowButton>
          <WindowButton aria-label="Развернуть"><svg width="7" height="7"><path d="M1 1h5v5H1z" fill="none" stroke="#fff" strokeWidth="1.500" /></svg></WindowButton>
          <WindowButton $close aria-label="Закрыть"><svg width="7" height="6"><path d="m1 0 5 6M6 0 1 6" stroke="#fff" strokeWidth="1.600" /></svg></WindowButton>
        </WindowButtons>
      </TitleBar>
      <TabBar>
        <Tab $active>Главная</Tab><Tab>Вставка</Tab><Tab>Разметка страницы</Tab><Tab>Формулы</Tab><Tab>Данные</Tab><Tab>Рецензирование</Tab><Tab>Вид</Tab>
        <TabTools>
          <svg width="9" height="9"><circle cx="4.500" cy="4.500" r="4" fill="#3f74d0" /><path d="M3 3.500q1.500-2 3 0-.2 1-1.500 1.500M4.500 6v1" stroke="#fff" fill="none" /></svg>
          <svg width="5" height="5"><path d="M0 4h5" stroke="#667" /></svg>
          <svg width="7" height="5"><path d="M.5 1h6v3h-6z" stroke="#667" fill="none" /></svg>
          <svg width="5" height="5"><path d="m0 0 5 5M5 0 0 5" stroke="#667" /></svg>
        </TabTools>
      </TabBar>
      <Ribbon />
      <FormulaBar>
        <NameBox><input aria-label="Имя" defaultValue="BQ11" /><Caret fill="#111" /></NameBox>
        <FxArea><svg width="5" height="5"><circle cx="2.500" cy="2.500" r="2" fill="#c9d8ee" stroke="#9ab" strokeWidth=".6" /></svg><Letter $italic>fx</Letter></FxArea>
        <FormulaInput aria-label="Строка формул" />
        <Expand aria-label="Развернуть строку формул"><svg width="5" height="6"><path d="m.5 0 2 2 2-2M.5 3l2 2 2-2" stroke="#111" fill="none" /></svg></Expand>
      </FormulaBar>
      <Workspace>
        <SheetPane>
          <Sheet>
            <colgroup><Col $w={14} />{columns.map(([n, w]) => <Col key={n} $w={w} />)}</colgroup>
            <thead><Tr $h={9}><Head />{columns.map(([n]) => <Head key={n} scope="col" $tone={n === "AC" ? "dark" : undefined}>{n}</Head>)}</Tr></thead>
            <tbody>
              {rows.map(([height, cells], i) => (
                <Tr key={i} $h={height}><Head scope="row" $tone={i === 10 ? "hot" : undefined}>{i + 1}</Head>{renderCells(cells)}</Tr>
              ))}
            </tbody>
          </Sheet>
          <Arrow $x={104} $y={97} width="18" height="42" viewBox="0 0 18 42">
            <path d="M3 18h12v15H3z" fill="#fff" />
            <path d="M10 2 9 35M3 21q4 5 6 14 1-8 5-13" stroke="#111" strokeWidth="1.800" fill="none" />
          </Arrow>
          <Arrow $x={492} $y={100} width="20" height="58" viewBox="0 0 20 58">
            <path d="M1 24h11v33H1z" fill="#fff" />
            <path d="M6.500 48 8 5M2 20Q6 14 8 5q3 7 8 18" stroke="#111" strokeWidth="1.800" fill="none" />
          </Arrow>
        </SheetPane>
        <VScroll>
          <Split />
          <ScrollArrow aria-label="Вверх"><svg width="5" height="3"><path d="M0 3h5L2.500 0z" fill="#2d4778" /></svg></ScrollArrow>
          <VThumb><svg width="5" height="5"><path d="M0 .5h5M0 2.500h5M0 4.500h5" stroke="#7c8da8" strokeWidth=".8" /></svg></VThumb>
          <ScrollArrow $end aria-label="Вниз"><svg width="5" height="3"><path d="M0 0h5L2.500 3z" fill="#2d4778" /></svg></ScrollArrow>
        </VScroll>
      </Workspace>
      <SheetTabs>
        <Pager>{["M1 0v5M5 0 2 2.500 5 5z", "M4 0 1 2.500 4 5z", "M1 0l3 2.500L1 5z", "M4.500 0v5M0 0l3 2.500L0 5z"].map((d) => <svg key={d} width="6" height="5"><path d={d} fill="#33538f" stroke="#33538f" strokeWidth=".5" /></svg>)}</Pager>
        <SheetTab $active><span>Лист1</span></SheetTab><SheetTab><span>Лист2</span></SheetTab><SheetTab><span>Лист3</span></SheetTab>
        <SheetTab $w={20} aria-label="Вставить лист"><svg width="9" height="8"><path d="M1 2h7v5H1z" fill="#fff" stroke="#6685b6" /><path d="M0 1h4v4H0z" fill="#f0b545" /></svg></SheetTab>
        <HScroll>
          <Grip />
          <HArrow aria-label="Влево"><svg width="3" height="5"><path d="M3 0v5L0 2.500z" fill="#2d4778" /></svg></HArrow>
          <HTrack><HThumb><svg width="5" height="5"><path d="M.5 0v5M2.500 0v5M4.500 0v5" stroke="#7c8da8" strokeWidth=".8" /></svg></HThumb></HTrack>
          <HArrow aria-label="Вправо"><svg width="3" height="5"><path d="M0 0v5l3-2.500z" fill="#2d4778" /></svg></HArrow>
          <Grip />
        </HScroll>
      </SheetTabs>
      <StatusBar>
        <Ready>Готово</Ready>
        <Views>
          <ViewButton $on aria-label="Обычный"><Align d="M.5 1.500h8v6h-8zM.5 4.500h8M3.500 1v7M6.500 1v7" /></ViewButton>
          <ViewButton aria-label="Разметка"><Align d="M1.500 1.500h6v6h-6zM3.500 3.500h2v2h-2z" /></ViewButton>
          <ViewButton aria-label="Страничный"><Align d="M1.500 1v6.500h6V1M4.500 1v4" /></ViewButton>
        </Views>
        <Zoom>79%<svg width="9" height="9"><circle cx="4.500" cy="4.500" r="3.800" fill="#eef4fc" stroke="#5f7397" /><path d="M2.500 4.500h4" stroke="#345" /></svg><Range type="range" min={0} max={100} defaultValue={42} aria-label="Масштаб" /><svg width="9" height="9"><circle cx="4.500" cy="4.500" r="3.800" fill="#eef4fc" stroke="#5f7397" /><path d="M2.500 4.500h4M4.500 2.500v4" stroke="#345" /></svg></Zoom>
      </StatusBar>
      <Taskbar>
        <svg width="22" height="22" viewBox="0 0 22 22"><circle cx="11" cy="11" r="10.500" fill="#1f5f97" stroke="#9dbdd2" strokeWidth=".8" /><path d="M2 9a9.300 9.300 0 0 1 18 0q-9 4-18 0z" fill="#6ba8cf" opacity=".7" /><g transform="translate(4.500 4)"><WindowsFlag s={13} /></g></svg>
        <Dots />
        <TaskList>
          <Task $w={28} aria-label="Калькулятор"><svg width="14" height="18" viewBox="0 0 14 18"><path d="M.5.500h13v17H.5z" fill="#a9cdec" stroke="#6b93bd" /><path d="M2 2h10v4H2z" fill="#f2f8fd" /><path d="M2 8h2v2H2zM5 8h2v2H5zM8 8h2v2H8zM2 11h2v2H2zM5 11h2v2H5zM8 11h2v2H8zM2 14h2v2H2zM5 14h2v2H5z" fill="#fff" /><path d="M10.500 8h2v5h-2z" fill="#e98f3b" /></svg></Task>
          <Task $open $w={35} aria-label="Яндекс"><svg width="19" height="19" viewBox="0 0 19 19"><circle cx="9.500" cy="9.500" r="9.300" fill="#fff" /><path d="M4.500 4 9.500 10.500 14.500 4M9.500 10v6.500" stroke="#e0212b" strokeWidth="2.600" fill="none" /></svg></Task>
          <Task $open $w={35} aria-label="Проводник"><svg width="16" height="18" viewBox="0 0 16 18"><path d="M1 1h6v16H1z" fill="#f7dd86" /><path d="M6 2h5l3 12-3 4-5-2z" fill="#f0cc62" stroke="#cfa53e" strokeWidth=".5" /><path d="M8 4v12" stroke="#fdf0bb" /></svg></Task>
          <Task $w={36} aria-label="Paint"><svg width="19" height="18" viewBox="0 0 19 18"><path d="M1 11Q1 4 9 4q7 0 8 5 0 3-4 3-2 1-1 3 0 3-5 2-6-1-6-6z" fill="#cfe2f2" stroke="#7ea0c0" strokeWidth=".6" /><circle cx="5" cy="8" r="1.500" fill="#e0483a" /><circle cx="9" cy="6.500" r="1.500" fill="#54a53c" /><circle cx="4.500" cy="12" r="1.500" fill="#3a6fd0" /><path d="m18 1-6 9" stroke="#c77a2c" strokeWidth="1.800" /></svg></Task>
          <Task $open $w={35} aria-label="Excel"><svg width="18" height="18" viewBox="0 0 18 18"><path d="M7 1h10v16H7z" fill="#f4faf2" stroke="#5c9c58" /><path d="M9 4h7M9 7h7M9 10h7M9 13h7M13 2v14" stroke="#6fb069" strokeWidth=".8" /><path d="M1 3 11 2v13L1 14z" fill="#e9f6e6" stroke="#2e7d32" /><path d="m3.500 5.500 5 6.500M8.500 5.500l-5 6.500" stroke="#2e8b3a" strokeWidth="1.900" /></svg></Task>
        </TaskList>
        <Tray>
          <Lang>RU</Lang>
          <Caret up fill="#eee" />
          <TrayIcon><svg width="10" height="10"><path d="M1 0v10" stroke="#fff" strokeWidth="1.200" /><path d="M2 1h6v4H2z" fill="#fff" /><circle cx="7" cy="7" r="2.800" fill="#dd2f25" /><path d="m6 6 2 2m0-2L6 8" stroke="#fff" strokeWidth=".8" /></svg></TrayIcon>
          <Speaker /><Speaker hot />
          <Clock dateTime="2020-12-08T21:31">21:31<br />08.12.2020</Clock>
        </Tray>
        <ShowDesktop aria-label="Показать рабочий стол" />
      </Taskbar>
    </Screen>
  );
}
